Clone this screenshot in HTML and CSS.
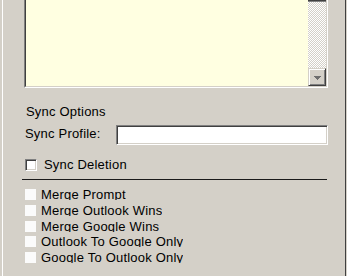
FILE: index.html
```html
<!DOCTYPE html>
<html>
<head>
<meta charset="utf-8">
<link rel="stylesheet" href="styles.css">
</head>
<body>
<div class="window">
  <div class="panel">
    <div class="memo">
      <div class="memo-inner">
        <div class="memo-text"></div>
        <div class="vscroll">
          <div class="thumb-end"></div>
          <div class="track"></div>
          <div class="btn-down">
            <svg width="7" height="4" viewBox="0 0 7 4"><path d="M0 0h7v1h-1v1h-1v1h-1v1h-1v-1h-1v-1h-1v-1h-1z" fill="#6e6e6e"/></svg>
          </div>
        </div>
      </div>
    </div>
    <div class="section-title">Sync Options</div>
    <div class="profile-row">
      <span class="profile-label">Sync Profile:</span>
      <div class="textbox"></div>
    </div>
    <div class="check-row">
      <span class="checkbox"></span>
      <span class="check-label">Sync Deletion</span>
    </div>
    <div class="separator"></div>
    <ul class="option-list">
      <li><span class="square"></span><span class="item-label">Merge Prompt</span></li>
      <li><span class="square"></span><span class="item-label">Merge Outlook Wins</span></li>
      <li><span class="square"></span><span class="item-label">Merge Google Wins</span></li>
      <li><span class="square"></span><span class="item-label">Outlook To Google Only</span></li>
      <li><span class="square"></span><span class="item-label">Google To Outlook Only</span></li>
    </ul>
  </div>
</div>
</body>
</html>
```
FILE: styles.css
```css
html, body {
  margin: 0;
  padding: 0;
}
body {
  background: #d4d0c8;
  font-family: "Liberation Sans", Arial, sans-serif;
  font-size: 13px;
  letter-spacing: 0.2px;
  color: #000;
  width: 347px;
  height: 276px;
  overflow: hidden;
}
.window {
  height: 276px;
  padding-left: 2px;
  box-sizing: border-box;
  display: flex;
}
.panel {
  width: 344px;
  box-sizing: border-box;
  border-left: 1px solid #ffffff;
  border-right: 1px solid #404040;
  padding: 0 17px 0 21px;
  display: flex;
  flex-direction: column;
}
.memo {
  height: 88px;
  box-sizing: border-box;
  border-left: 1px solid #808080;
  border-right: 1px solid #ffffff;
  border-bottom: 1px solid #ffffff;
  display: flex;
}
.memo-inner {
  flex: 1;
  display: flex;
  border-left: 1px solid #404040;
  border-right: 1px solid #d4d0c8;
  border-bottom: 1px solid #d4d0c8;
}
.memo-text {
  flex: 1;
  background: #ffffe1;
}
.vscroll {
  width: 18px;
  display: flex;
  flex-direction: column;
}
.thumb-end {
  height: 1px;
  border-top: 1px solid #404040;
  background: #808080;
}
.track {
  flex: 1;
  background: repeating-conic-gradient(#d4d0c8 0 25%, #ffffff 0 50%);
  background-size: 2px 2px;
}
.btn-down {
  height: 18px;
  box-sizing: border-box;
  background: #d4d0c8;
  border: 1px solid;
  border-color: #d4d0c8 #404040 #404040 #d4d0c8;
  box-shadow: inset 1px 1px #ffffff, inset -1px -1px #808080;
  display: flex;
  align-items: center;
  justify-content: center;
}
.btn-down svg {
  display: block;
  margin-top: 1px;
}
.section-title {
  margin-top: 16px;
  line-height: 15px;
  padding-left: 2px;
}
.profile-row {
  margin-top: 6px;
  height: 20px;
  display: flex;
  align-items: flex-start;
}
.profile-label {
  margin-top: 1px;
  padding-left: 1px;
  line-height: 15px;
}
.textbox {
  margin-left: auto;
  width: 212px;
  height: 20px;
  box-sizing: border-box;
  background: #ffffff;
  border: 1px solid;
  border-color: #808080 #ffffff #ffffff #808080;
  box-shadow: inset 1px 1px #404040, inset -1px -1px #d4d0c8;
}
.check-row {
  margin-top: 12px;
  height: 15px;
  line-height: 15px;
  display: flex;
  align-items: center;
  padding-left: 1px;
  gap: 7px;
}
.checkbox {
  width: 12px;
  height: 12px;
  box-sizing: border-box;
  background: #ffffff;
  border: 1px solid;
  border-color: #808080 #ffffff #ffffff #808080;
  box-shadow: inset 1px 1px #404040, inset -1px -1px #d4d0c8;
}
.separator {
  margin: 7px 1px 0 -2px;
  height: 1px;
  background: #1a1a1a;
}
.option-list {
  list-style: none;
  margin: 7px 0 0 0;
  padding: 0;
}
.option-list li {
  height: 15.75px;
  display: flex;
  align-items: flex-start;
  padding-left: 1px;
}
.square {
  width: 11px;
  height: 11px;
  margin-top: 2px;
  background: #fbfbfb;
  flex: none;
}
.item-label {
  margin-left: 5px;
  line-height: 15px;
  height: 13px;
  overflow: hidden;
  white-space: nowrap;
}
```
